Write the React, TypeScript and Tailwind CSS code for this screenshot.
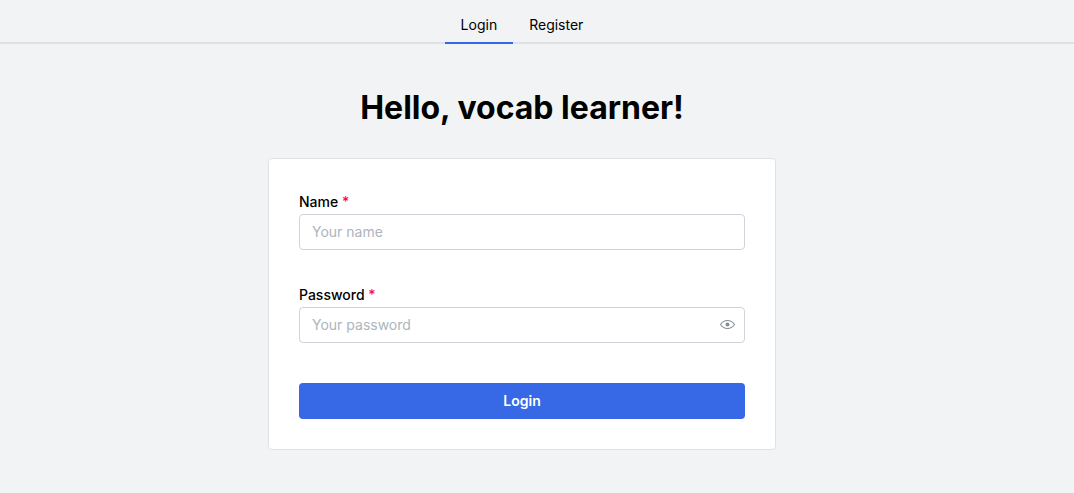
import { useState } from "react";
import type { ReactNode } from "react";

const inputClass =
  "block h-9 w-full rounded border border-[#ced4da] bg-white pb-0.5 text-black outline-none placeholder:text-[#adb5bd] focus:border-[#3369e7]";

function Field({ id, label, children }: { id: string; label: string; children: ReactNode }) {
  return (
    <div>
      <label htmlFor={id} className="block leading-6 font-medium">
        {label} <span className="text-[#ff0a4b]" aria-hidden="true">*</span>
      </label>
      {children}
    </div>
  );
}

function EyeIcon() {
  return (
    <svg width="15" height="15" viewBox="0 0 15 15" fill="none" aria-hidden="true">
      <path
        d="M7.5 11C4.80285 11 2.52952 9.62184 1.09622 7.50001C2.52952 5.37816 4.80285 4 7.5 4C10.1971 4 12.4705 5.37816 13.9038 7.50001C12.4705 9.62183 10.1971 11 7.5 11ZM7.5 3C4.30786 3 1.65639 4.70638 0.0760002 7.23501C-0.0253338 7.39715 -0.0253334 7.60288 0.0760014 7.76501C1.65639 10.2936 4.30786 12 7.5 12C10.6921 12 13.3436 10.2936 14.924 7.76501C15.0253 7.60288 15.0253 7.39715 14.924 7.23501C13.3436 4.70638 10.6921 3 7.5 3ZM7.5 9.5C8.60457 9.5 9.5 8.60457 9.5 7.5C9.5 6.39543 8.60457 5.5 7.5 5.5C6.39543 5.5 5.5 6.39543 5.5 7.5C5.5 8.60457 6.39543 9.5 7.5 9.5Z"
        fill="currentColor"
        fillRule="evenodd"
        clipRule="evenodd"
      />
    </svg>
  );
}

export default function App() {
  const [shown, setShown] = useState(false);

  return (
    <div className="min-h-screen bg-[#f1f3f5] font-['Inter',sans-serif] text-sm text-black">
      <nav className="flex h-11 items-end justify-center border-b-2 border-[#dee2e6] pr-[30px]">
        <a href="#login" aria-current="page" className="-mb-0.5 border-b-2 border-[#3369e7] px-4 py-2 leading-[18px]">
          Login
        </a>
        <a href="#register" className="-mb-0.5 border-b-2 border-transparent px-4 py-2 leading-[18px]">
          Register
        </a>
      </nav>
      <main className="flex justify-center pt-[42px] pr-[30px] pb-10">
        <div className="w-full max-w-[508px]">
          <h1 className="text-center text-[32px] leading-[44px] font-bold">Hello, vocab learner!</h1>
          <form
            className="mt-7 rounded border border-[#dee2e6] bg-white px-[30px] pt-[31px] pb-[30px]"
            onSubmit={(event) => event.preventDefault()}
          >
            <div className="flex flex-col gap-[33px]">
              <Field id="name" label="Name">
                <input id="name" type="text" required placeholder="Your name" className={`${inputClass} px-3`} />
              </Field>
              <Field id="password" label="Password">
                <div className="relative">
                  <input
                    id="password"
                    type={shown ? "text" : "password"}
                    required
                    placeholder="Your password"
                    className={`${inputClass} pr-9 pl-3`}
                  />
                  <button
                    type="button"
                    aria-label={shown ? "Hide password" : "Show password"}
                    onClick={() => setShown(!shown)}
                    className="absolute inset-y-0 right-0 flex w-[35px] items-center justify-center pb-0.5 text-[#868e96]"
                  >
                    <EyeIcon />
                  </button>
                </div>
              </Field>
            </div>
            <button type="submit" className="mt-10 h-9 w-full rounded bg-[#3769e7] font-semibold text-white">
              Login
            </button>
          </form>
        </div>
      </main>
    </div>
  );
}
